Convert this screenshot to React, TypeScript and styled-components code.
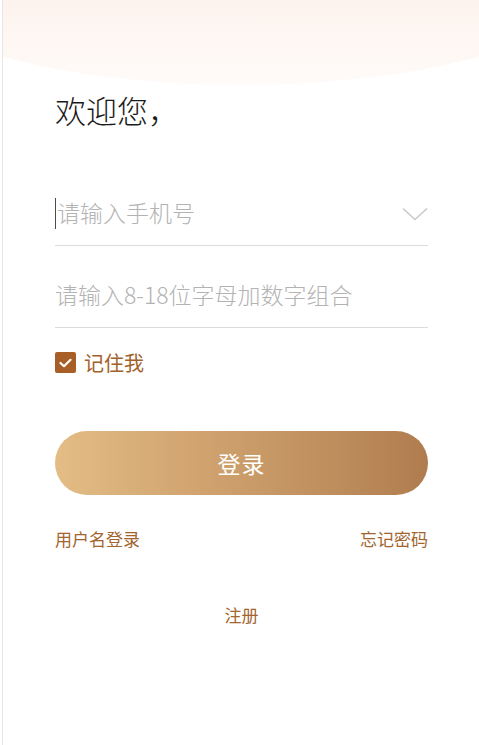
import styled, { createGlobalStyle } from 'styled-components';

const GlobalStyle = createGlobalStyle`
  html, body {
    margin: 0;
    padding: 0;
    background: #fff;
  }
  body {
    font-family: "Noto Sans CJK SC", "Noto Sans", sans-serif;
  }
`;

const Page = styled.div`
  position: relative;
  min-height: 100vh;
  margin-left: 2px;
  border-left: 1px solid #e6e6e6;
  background: #fff;
  overflow: hidden;
`;

const Hero = styled.div`
  position: relative;
  height: 85px;
  overflow: hidden;

  &::before {
    content: '';
    position: absolute;
    left: 50%;
    top: -129px;
    width: 700px;
    height: 214px;
    transform: translateX(-50%);
    border-radius: 50%;
    background: linear-gradient(180deg, #fdf0e9 0%, #fdf3ee 60%, #fef7f3 80%, #fffbf9 100%);
  }
`;

const Form = styled.div`
  display: flex;
  flex-direction: column;
  padding: 0 51px 0 52px;
`;

const Title = styled.h1`
  margin: 5px 0 0;
  font-size: 31px;
  line-height: 40px;
  font-weight: 300;
  color: #1a1a1a;
`;

const Field = styled.label<{ $first?: boolean }>`
  display: flex;
  align-items: center;
  height: 63px;
  margin-top: ${(p) => (p.$first ? '52px' : '18px')};
  border-bottom: 1px solid #dcdcdc;
`;

const Caret = styled.span`
  width: 1px;
  height: 31px;
  background: #4a4a4a;
  margin-right: 1px;
`;

const Input = styled.input`
  flex: 1;
  min-width: 0;
  border: none;
  outline: none;
  padding: 0;
  margin-top: -3px;
  background: transparent;
  font-family: inherit;
  font-size: 23px;
  font-weight: 300;
  color: #333;

  &::placeholder {
    color: #b3b3b3;
  }
`;

const Chevron = styled.svg`
  width: 26px;
  height: 14px;
  flex-shrink: 0;
`;

const Remember = styled.label`
  display: flex;
  align-items: center;
  gap: 8px;
  height: 21px;
  margin-top: 24px;
  font-size: 20px;
  color: #a2612b;
`;

const Check = styled.span`
  display: inline-flex;
  align-items: center;
  justify-content: center;
  width: 21px;
  height: 21px;
  border-radius: 2px;
  background: #a85f27;
`;

const LoginButton = styled.button`
  height: 64px;
  margin-top: 58px;
  border: none;
  border-radius: 32px;
  background: linear-gradient(90deg, #e3bd85 0%, #d2a571 35%, #c0915f 70%, #b07c4f 100%);
  color: #fff;
  font-family: inherit;
  font-size: 23px;
  letter-spacing: 1px;
  cursor: pointer;
`;

const LinkRow = styled.div`
  display: flex;
  justify-content: space-between;
  align-items: center;
  margin-top: 32px;
  line-height: 24px;
`;

const TextLink = styled.a`
  font-size: 17px;
  color: #a2652f;
  text-decoration: none;
  cursor: pointer;
`;

const RegisterRow = styled.div`
  display: flex;
  justify-content: center;
  margin-top: 52px;
  line-height: 24px;
`;

const App = () => {
  return (
    <>
      <GlobalStyle />
      <Page>
        <Hero />
        <Form>
          <Title>欢迎您，</Title>
          <Field $first>
            <Caret />
            <Input placeholder="请输入手机号" />
            <Chevron viewBox="0 0 26 14">
              <path d="M1 1.5 L13 12.5 L25 1.5" fill="none" stroke="#c8c8c8" strokeWidth="1.5" />
            </Chevron>
          </Field>
          <Field>
            <Input type="password" placeholder="请输入8-18位字母加数字组合" />
          </Field>
          <Remember>
            <Check>
              <svg width="13" height="10" viewBox="0 0 13 10">
                <path d="M1.5 5 L5 8.2 L11.5 1.8" fill="none" stroke="#fff" strokeWidth="2.2" strokeLinecap="round" strokeLinejoin="round" />
              </svg>
            </Check>
            记住我
          </Remember>
          <LoginButton>登录</LoginButton>
          <LinkRow>
            <TextLink>用户名登录</TextLink>
            <TextLink>忘记密码</TextLink>
          </LinkRow>
          <RegisterRow>
            <TextLink>注册</TextLink>
          </RegisterRow>
        </Form>
      </Page>
    </>
  );
};

export default App;
